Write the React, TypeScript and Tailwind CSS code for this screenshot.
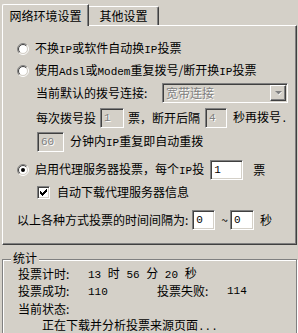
import React from 'react';

const Latin = ({ children }: { children: React.ReactNode }) => (
  <span className="font-['Liberation_Mono',monospace] text-[11px] whitespace-pre">{children}</span>
);

function arc(r: number, topLeft: boolean) {
  const c = 6;
  const d = r * 0.7071;
  const bl = `${c - d} ${c + d}`;
  const tr = `${c + d} ${c - d}`;
  return topLeft ? `M${bl} A${r} ${r} 0 0 1 ${tr}` : `M${tr} A${r} ${r} 0 0 1 ${bl}`;
}

function Radio({ checked }: { checked?: boolean }) {
  return (
    <svg width="12" height="12" viewBox="0 0 12 12" className="shrink-0">
      <circle cx="6" cy="6" r="4.5" fill="#fff" />
      <path d={arc(5.5, true)} stroke="#808080" fill="none" />
      <path d={arc(5.5, false)} stroke="#fff" fill="none" />
      <path d={arc(4.5, true)} stroke="#404040" fill="none" />
      <path d={arc(4.5, false)} stroke="#d4d0c8" fill="none" />
      {checked && <circle cx="6" cy="6" r="2" fill="#000" />}
    </svg>
  );
}

function Checkbox() {
  const px: [number, number][] = [
    [6, 0], [5, 1], [6, 1], [0, 2], [4, 2], [5, 2], [6, 2], [0, 3], [1, 3], [3, 3], [4, 3], [5, 3],
    [0, 4], [1, 4], [2, 4], [3, 4], [4, 4], [1, 5], [2, 5], [3, 5], [2, 6],
  ];
  return (
    <div className="w-[13px] h-[13px] shrink-0 bg-white border border-t-[#808080] border-l-[#808080] border-b-white border-r-white shadow-[inset_1px_1px_0_#404040,inset_-1px_-1px_0_#d4d0c8]">
      <svg width="11" height="11" viewBox="0 0 11 11" className="block">
        {px.map(([x, y], i) => (
          <rect key={i} x={x + 2} y={y + 2} width="1" height="1" fill="#000" />
        ))}
      </svg>
    </div>
  );
}

const sunken =
  'border border-t-[#808080] border-l-[#808080] border-b-white border-r-white shadow-[inset_1px_1px_0_#404040,inset_-1px_-1px_0_#d4d0c8]';

function Input({ w, value, disabled }: { w: string; value: string; disabled?: boolean }) {
  return (
    <div
      className={`${w} h-[20px] shrink-0 flex items-center pl-[3px] ${sunken} ${
        disabled ? 'bg-[#d4d0c8] text-[#808080] [text-shadow:1px_1px_0_#fff]' : 'bg-white text-black'
      }`}
    >
      <Latin>{value}</Latin>
    </div>
  );
}

export default function App() {
  return (
    <div className="w-[298px] h-[333px] bg-[#d4d0c8] overflow-hidden text-[12px] leading-none text-black font-['Noto_Sans_CJK_SC',sans-serif]">
      {/* tabs */}
      <div className="flex items-end h-[25px] pl-[2px]">
        <div className="relative z-10 -mb-px h-[22px] w-[87px] bg-[#d4d0c8] border-t border-l border-white border-r border-r-[#404040] shadow-[inset_-1px_0_0_#808080] rounded-tl-[2px] flex items-center justify-center">
          网络环境设置
        </div>
        <div className="h-[19px] w-[70px] border-t border-white border-r border-r-[#404040] shadow-[inset_-1px_0_0_#808080] rounded-tr-[2px] flex items-center justify-center">
          其他设置
        </div>
      </div>
      {/* panel */}
      <div className="ml-[2px] w-[295px] h-[220px] border border-t-white border-l-white border-r-[#404040] border-b-[#404040] shadow-[inset_-1px_-1px_0_#808080] flex flex-col">
        <div className="mt-[13px] h-[20px] flex items-center pl-[14px] gap-[6px]">
          <Radio />
          <span>
            不换<Latin>IP</Latin>或软件自动换<Latin>IP</Latin>投票
          </span>
        </div>
        <div className="mt-[2px] h-[20px] flex items-center pl-[14px] gap-[6px]">
          <Radio />
          <span>
            使用<Latin>Adsl</Latin>或<Latin>Modem</Latin>重复拨号/断开换<Latin>IP</Latin>投票
          </span>
        </div>
        <div className="mt-[2px] h-[20px] flex items-center pl-[33px]">
          <span className="w-[126px] shrink-0">当前默认的拨号连接:</span>
          <div className={`w-[126px] h-[20px] flex items-center bg-[#d4d0c8] ${sunken}`}>
            <span className="flex-1 pl-[3px] text-[#808080] [text-shadow:1px_1px_0_#fff]">宽带连接</span>
            <div className="w-[16px] h-[16px] mr-px flex items-center justify-center bg-[#d4d0c8] border border-t-white border-l-white border-r-[#404040] border-b-[#404040] shadow-[inset_-1px_-1px_0_#808080]">
              <svg width="7" height="5" viewBox="0 0 7 5">
                <path d="M1 1h6L4 4.5z" fill="#fff" />
                <path d="M0 0h7L3.5 3.5z" fill="#808080" />
              </svg>
            </div>
          </div>
        </div>
        <div className="mt-[5px] h-[20px] flex items-center pl-[33px]">
          <span>每次拨号投</span>
          <div className="ml-[4px]">
            <Input w="w-[24px]" value="1" disabled />
          </div>
          <span className="ml-[4px]">票，断开后隔</span>
          <div className="ml-[5px]">
            <Input w="w-[22px]" value="4" disabled />
          </div>
          <span className="ml-[6px]">
            秒再拨号<Latin>.</Latin>
          </span>
        </div>
        <div className="mt-[4px] h-[20px] flex items-center pl-[34px]">
          <Input w="w-[27px]" value="60" disabled />
          <span className="ml-[6px]">
            分钟内<Latin>IP</Latin>重复即自动重拨
          </span>
        </div>
        <div className="mt-[8px] h-[20px] flex items-center pl-[14px]">
          <Radio checked />
          <span className="ml-[6px]">
            启用代理服务器投票，每个<Latin>IP</Latin>投
          </span>
          <div className="ml-[6px]">
            <Input w="w-[33px]" value="1" />
          </div>
          <span className="ml-[10px]">票</span>
        </div>
        <div className="mt-[4px] h-[16px] flex items-center pl-[34px]">
          <Checkbox />
          <span className="ml-[7px]">自动下载代理服务器信息</span>
        </div>
        <div className="mt-[10px] h-[20px] flex items-center pl-[14px]">
          <span>以上各种方式投票的时间间隔为:</span>
          <div className="ml-[4px]">
            <Input w="w-[23px]" value="0" />
          </div>
          <span className="ml-[6px]">~</span>
          <div className="ml-[2px]">
            <Input w="w-[24px]" value="0" />
          </div>
          <span className="ml-[6px]">秒</span>
        </div>
      </div>
      {/* group box */}
      <div className="relative mt-[14px] ml-[2px] w-[295px] h-[100px] border border-[#808080] shadow-[inset_1px_1px_0_#fff,1px_1px_0_#fff]">
        <span className="absolute -top-[8px] left-[8px] px-[2px] bg-[#d4d0c8]">统计</span>
        <div className="pt-[5px] pl-[15px] flex flex-col">
          <div className="h-[17px] flex items-center">
            <span className="w-[70px]">投票计时:</span>
            <span>
              <Latin>13 </Latin>时<Latin> 56 </Latin>分<Latin> 20 </Latin>秒
            </span>
          </div>
          <div className="h-[18px] flex items-center">
            <span className="w-[70px]">投票成功:</span>
            <span className="w-[69px]">
              <Latin>110</Latin>
            </span>
            <span className="w-[70px]">投票失败:</span>
            <Latin>114</Latin>
          </div>
          <div className="h-[17px] flex items-center">
            <span>当前状态:</span>
          </div>
          <div className="h-[17px] flex items-center pl-[24px]">
            <span>
              正在下载并分析投票来源页面<Latin>...</Latin>
            </span>
          </div>
        </div>
      </div>
    </div>
  );
}
